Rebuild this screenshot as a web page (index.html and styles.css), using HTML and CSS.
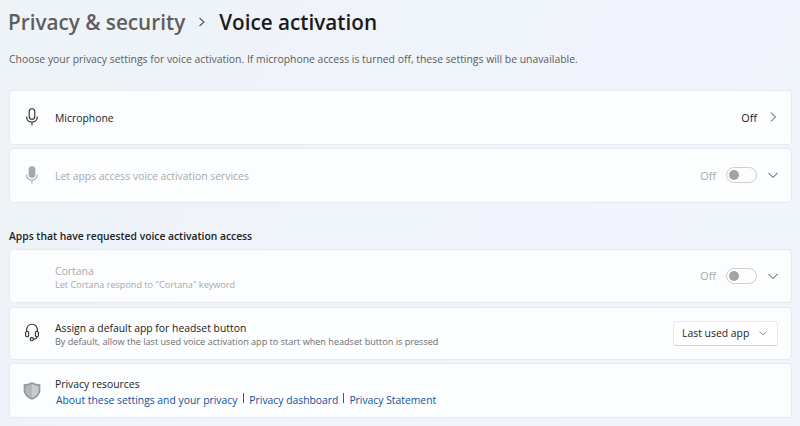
FILE: index.html
```html
<!DOCTYPE html>
<html lang="en">
<head>
  <meta charset="UTF-8">
  <meta name="viewport" content="width=device-width, initial-scale=1.0">
  <title>Voice activation</title>
  <link rel="stylesheet" href="styles.css">
</head>
<body>
  <header class="crumbs">
    <span class="crumb-parent">Privacy &amp; security</span>
    <svg class="crumb-sep" width="10" height="12" viewBox="0 0 10 12"><path d="M2.5 2 L7 6 L2.5 10"/></svg>
    <h1>Voice activation</h1>
  </header>
  <p class="intro">Choose your privacy settings for voice activation. If microphone access is turned off, these settings will be unavailable.</p>

  <main>
    <div class="cards top-cards">
      <div class="card">
        <svg class="icon" width="20" height="20" viewBox="0 0 20 20"><rect x="7.2" y="1.8" width="5.6" height="10.4" rx="2.8"/><path d="M4.6 9.5 C4.6 13 7 15 10 15 C13 15 15.4 13 15.4 9.5 M10 15 V18.6"/></svg>
        <span class="title single">Microphone</span>
        <span class="state">Off</span>
        <svg class="chev" width="12" height="12" viewBox="0 0 12 12"><path d="M4 1.5 L8.5 6 L4 10.5"/></svg>
      </div>
      <div class="card disabled">
        <svg class="icon" width="20" height="20" viewBox="0 0 20 20"><rect class="solid" x="7.2" y="1.8" width="5.6" height="10.4" rx="2.8"/><path d="M4.6 9.5 C4.6 13 7 15 10 15 C13 15 15.4 13 15.4 9.5 M10 15 V18.6"/></svg>
        <span class="title single">Let apps access voice activation services</span>
        <span class="state">Off</span>
        <span class="toggle"></span>
        <svg class="chev" width="12" height="12" viewBox="0 0 12 12"><path d="M1.5 4 L6 8.5 L10.5 4"/></svg>
      </div>
    </div>

    <h2>Apps that have requested voice activation access</h2>

    <div class="cards">
      <div class="card disabled">
        <span class="icon-space"></span>
        <div class="text">
          <span class="title">Cortana</span>
          <span class="sub">Let Cortana respond to "Cortana" keyword</span>
        </div>
        <span class="state">Off</span>
        <span class="toggle"></span>
        <svg class="chev" width="12" height="12" viewBox="0 0 12 12"><path d="M1.5 4 L6 8.5 L10.5 4"/></svg>
      </div>
      <div class="card short">
        <svg class="icon" width="20" height="20" viewBox="0 0 20 20"><path d="M4.6 8.5 V7.4 C4.6 3.6 7 1.2 10 1.2 C13 1.2 15.4 3.6 15.4 7.4 V8.5"/><rect x="3.6" y="8.5" width="3" height="5.2" rx="1.2"/><rect x="13.4" y="8.5" width="3" height="5.2" rx="1.2"/><path d="M15 13.7 C15 15.4 13.6 16.2 11.4 16.2"/><circle cx="9.8" cy="16.2" r="1.6"/></svg>
        <div class="text">
          <span class="title">Assign a default app for headset button</span>
          <span class="sub">By default, allow the last used voice activation app to start when headset button is pressed</span>
        </div>
        <div class="dropdown">
          <span>Last used app</span>
          <svg width="10" height="10" viewBox="0 0 10 10"><path d="M1.5 3.5 L5 6.8 L8.5 3.5"/></svg>
        </div>
      </div>
      <div class="card">
        <svg class="shield" width="20" height="22" viewBox="0 0 20 22"><path class="shield-rim" d="M10 3 C7.5 4.6 4.5 5.2 1.6 5.2 V11 C1.6 15.5 5 19 10 20.8 C15 19 18.4 15.5 18.4 11 V5.2 C15.5 5.2 12.5 4.6 10 3 Z"/><path class="shield-left" d="M10 5 C8 6.2 5.6 6.8 3.4 6.9 V11 C3.4 14.6 6 17.4 10 19 Z"/><path class="shield-right" d="M10 5 C12 6.2 14.4 6.8 16.6 6.9 V11 C16.6 14.6 14 17.4 10 19 Z"/></svg>
        <div class="text resources">
          <span class="title">Privacy resources</span>
          <div class="links">
            <a class="first-link" href="#">About these settings and your privacy</a>
            <i></i>
            <a href="#">Privacy dashboard</a>
            <i></i>
            <a href="#">Privacy Statement</a>
          </div>
        </div>
      </div>
    </div>
  </main>
</body>
</html>
```

FILE: styles.css
```css
body { margin: 0; height: 426px; overflow: hidden; font-family: 'Open Sans', sans-serif; color: #1f1f1f; background: linear-gradient(120deg, #eef3f8, #f0f3fb 60%, #f1f5fb); }
.crumbs { display: flex; align-items: center; height: 24px; padding: 10px 0 0 8px; }
.crumb-parent { font-size: 20.7px; font-weight: 600; color: #5e5e5e; }
.crumb-sep { margin: 0 12px 0 12px; fill: none; stroke: #555; stroke-width: 1.1; }
h1 { margin: 0; font-size: 20.7px; font-weight: 600; color: #1b1b1b; }
.intro { margin: 17px 0 0 9px; font-size: 10.4px; line-height: 16px; color: #5d5d5d; }
main { margin: 23px 8px 0 9px; }
.cards { display: flex; flex-direction: column; gap: 3.5px; }
.card { display: flex; align-items: center; height: 52.5px; padding: 0 12px; background: #fcfdfe; border: 1px solid #e6e9ee; border-radius: 4px; }
.card.short { height: 51px; }
.icon { flex: none; fill: none; stroke: #2b2b2b; stroke-width: 1.1; }
.icon .solid { fill: #2b2b2b; }
.icon-space { flex: none; width: 20px; }
.shield { flex: none; }
.shield-rim { fill: #969a9f; }
.shield-left { fill: #b4b8bc; }
.shield-right { fill: #c8cbce; }
.text { display: flex; flex-direction: column; margin-top: 3px; }
.resources { margin-top: 4px; }
.title { margin-left: 13px; font-size: 10.4px; line-height: 15px; color: #222; }
.title.single { margin-top: 2px; }
.sub { margin: -1px 0 0 13px; font-size: 9.1px; line-height: 13px; color: #6d6d6d; }
.state { margin-left: auto; font-size: 10.8px; color: #222; }
.chev { flex: none; margin-left: 10px; fill: none; stroke: #444; stroke-width: 1; }
.disabled .icon { opacity: 0.4; }
.disabled .title, .disabled .sub, .disabled .state { color: #a8a8a8; }
.toggle { position: relative; flex: none; width: 29px; height: 14px; margin-left: 10px; border: 1px solid #cfcfcf; border-radius: 8px; }
.toggle::before { content: ""; position: absolute; left: 2px; top: 2px; width: 10px; height: 10px; border-radius: 50%; background: #a3a3a3; }
h2 { margin: 25px 0 6px 0; font-size: 10.3px; line-height: 16px; height: 15px; font-weight: 600; color: #222; }
.dropdown { display: flex; align-items: center; justify-content: space-between; box-sizing: border-box; width: 105px; height: 25px; margin-left: auto; margin-right: 1px; padding: 0 9px 0 8px; font-size: 10.4px; white-space: nowrap; color: #222; background: #fff; border: 1px solid #e8e8e8; border-bottom-color: #d2d2d2; border-radius: 4px; }
.dropdown svg { fill: none; stroke: #888; stroke-width: 1; }
.links { display: flex; align-items: center; gap: 5px; margin: 0 0 0 14px; font-size: 10.35px; line-height: 16px; }
.links a { color: #0f4f9e; text-decoration: none; }
.links .first-link { margin-right: 1px; }
.links i { width: 1px; height: 10px; margin-top: -4px; background: #555; }
```
